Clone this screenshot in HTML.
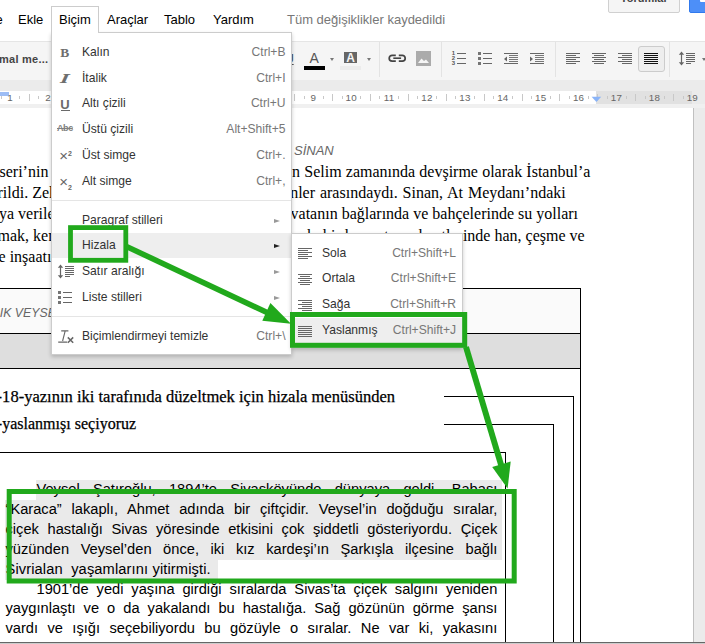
<!DOCTYPE html>
<html lang="tr"><head><meta charset="utf-8"><title>Biçim - Hizala</title>
<style>
html,body{margin:0;padding:0;}
body{width:705px;height:644px;position:relative;overflow:hidden;background:#fff;font-family:"Liberation Sans",Arial,sans-serif;color:#000;}
.abs{position:absolute;white-space:nowrap;}
.mb{position:absolute;top:12px;font-size:13px;line-height:16px;color:#000;white-space:nowrap;}
#tb{position:absolute;left:0;top:41px;width:705px;height:39px;background:#f5f5f5;border-top:1px solid #e5e5e5;box-sizing:border-box;}
#band{position:absolute;left:0;top:80px;width:705px;height:28px;background:#ebebeb;}
#ruler{position:absolute;left:0;top:91px;width:596px;height:13px;background:#fff;}
#ruler2{position:absolute;left:596px;top:91px;width:96px;height:13px;background:#e1e1e1;}
.rn{position:absolute;top:92px;font-size:9.8px;letter-spacing:0.2px;text-indent:0.2px;line-height:11px;color:#666;width:20px;text-align:center;}
#page{position:absolute;left:0;top:108px;width:693px;height:536px;background:#fff;border-right:1px solid #c0c0c0;}
#side{position:absolute;left:694px;top:108px;width:11px;height:536px;background:#ebebeb;}
.sep{position:absolute;top:42px;width:1px;height:35px;background:#e3e3e3;}
.dd{width:0;height:0;border-left:2.5px solid transparent;border-right:2.5px solid transparent;border-top:3px solid #777;}
.ser{position:absolute;font-family:"Liberation Serif","Times New Roman",serif;font-size:16px;line-height:20px;white-space:nowrap;color:#000;}
.par{position:absolute;font-size:14.67px;line-height:20px;color:#000;white-space:nowrap;text-align:justify;text-align-last:justify;}
.hl{background:#eaeaea;}
#menu{position:absolute;left:51px;top:32px;width:241px;height:323px;background:#fff;border:1px solid #ccc;box-sizing:border-box;box-shadow:0 2px 4px rgba(0,0,0,.2);}
.mi{position:absolute;left:0;width:239px;height:26px;font-size:12.1px;line-height:26px;color:#333;}
.mi .l{position:absolute;left:30px;}
.mi .s{position:absolute;right:5.5px;color:#777;}
.tri{position:absolute;right:11px;top:11.6px;width:0;height:0;border-top:2.8px solid transparent;border-bottom:2.8px solid transparent;border-left:6px solid #999;}
.trih{border-left-color:#222;}
.msep{position:absolute;left:0;width:239px;height:1px;background:#e5e5e5;}
#sub{position:absolute;left:291px;top:233px;width:172px;height:115px;background:#fff;border:1px solid #ccc;box-sizing:border-box;box-shadow:0 2px 4px rgba(0,0,0,.2);}
.si{position:absolute;left:0;width:170px;height:25px;font-size:12.1px;line-height:25px;color:#333;}
.si .l{position:absolute;left:30px;}
.si .s{position:absolute;right:6px;color:#777;}
.ln{position:absolute;height:1px;}
</style></head><body>
<div class="mb" style="left:-4.5px">e</div>
<div class="mb" style="left:18px">Ekle</div>
<div class="abs" style="left:51px;top:6px;width:48px;height:27px;border:1px solid #ccc;border-bottom:none;box-sizing:border-box;background:#fff;z-index:5"></div>
<div class="mb" style="left:59px;z-index:6">Biçim</div>
<div class="mb" style="left:107px">Araçlar</div>
<div class="mb" style="left:164px">Tablo</div>
<div class="mb" style="left:213px">Yardım</div>
<div class="mb" style="left:287px;color:#777">Tüm değişiklikler kaydedildi</div>
<div class="abs" style="left:608px;top:-15px;width:72px;height:28px;border:1px solid #d0d0d0;border-radius:2px;box-sizing:border-box;background:#f5f5f5;font-size:11px;font-weight:bold;color:#444;text-align:center;line-height:24px;">Yorumlar</div>
<div class="abs" style="left:689px;top:-15px;width:31px;height:28px;border:1px solid #3079ed;border-radius:2px;box-sizing:border-box;background:#4d8ff8;"></div>
<div class="abs" style="left:700px;top:-2px;width:8px;height:4px;background:#fff;border-radius:1px;"></div>
<div id="tb"></div>
<div class="abs" style="left:-1px;top:52px;font-size:11px;font-weight:bold;color:#444;line-height:14px;letter-spacing:0.25px;">mal me...</div>
<div class="sep" style="left:379px"></div>
<div class="sep" style="left:441px"></div>
<div class="sep" style="left:555px"></div>
<div class="sep" style="left:669px"></div>
<div class="abs" style="left:309.5px;top:50px;font-size:14px;line-height:16px;color:#555;">A</div>
<div class="abs" style="left:304px;top:66px;width:21px;height:4px;background:#000;"></div>
<div class="abs dd" style="left:330px;top:58px;"></div>
<div class="abs" style="left:344px;top:52px;width:13px;height:11px;background:#666;color:#f5f5f5;font-size:12px;font-weight:bold;line-height:12px;text-align:center;">A</div>
<div class="abs" style="left:340px;top:66px;width:21px;height:4px;background:#ececec;"></div>
<div class="abs dd" style="left:367px;top:58px;"></div>
<div class="abs" style="left:285px;top:52px;font-size:12px;font-weight:bold;color:#555;line-height:14px;text-decoration:underline;">U</div>
<svg class="abs" style="left:388px;top:54px" width="19" height="9" viewBox="0 0 19 9"><path d="M7.8 1.3 H4.1 a2.9 2.9 0 0 0 0 5.8 H7.8 M10.8 1.3 H14.3 a2.9 2.9 0 0 1 0 5.8 H10.8" fill="none" stroke="#444" stroke-width="1.7"/><rect x="5.3" y="3.4" width="7.8" height="1.6" fill="#444"/></svg>
<svg class="abs" style="left:416px;top:51px" width="15" height="15" viewBox="0 0 15 15"><rect width="15" height="15" fill="#ababab"/><path d="M2 12 L5.5 7.5 L8 10 L10 8.5 L13 12 Z" fill="#f5f5f5"/></svg>
<div class="ln" style="left:457px;top:53px;width:9px;background:#666;"></div><div class="abs" style="left:451.8px;top:50.4px;font-size:6px;font-weight:bold;line-height:7px;color:#555;">1</div><div class="ln" style="left:457px;top:58px;width:9px;background:#666;"></div><div class="abs" style="left:451.8px;top:55.4px;font-size:6px;font-weight:bold;line-height:7px;color:#555;">2</div><div class="ln" style="left:457px;top:63px;width:9px;background:#666;"></div><div class="abs" style="left:451.8px;top:60.4px;font-size:6px;font-weight:bold;line-height:7px;color:#555;">3</div>
<div class="ln" style="left:483px;top:53px;width:9px;background:#666;"></div><div class="abs" style="left:478px;top:52px;width:3px;height:3px;background:#757575;"></div><div class="ln" style="left:483px;top:58px;width:9px;background:#666;"></div><div class="abs" style="left:478px;top:57px;width:3px;height:3px;background:#757575;"></div><div class="ln" style="left:483px;top:63px;width:9px;background:#666;"></div><div class="abs" style="left:478px;top:62px;width:3px;height:3px;background:#757575;"></div>
<div class="ln" style="left:504px;top:53px;width:14px;background:#666;"></div><div class="ln" style="left:509px;top:55px;width:9px;background:#777;"></div><div class="ln" style="left:509px;top:57px;width:9px;background:#777;"></div><div class="ln" style="left:509px;top:59px;width:9px;background:#777;"></div><div class="ln" style="left:509px;top:61px;width:9px;background:#777;"></div><div class="ln" style="left:504px;top:63px;width:14px;background:#666;"></div><svg class="abs" style="left:504px;top:56px" width="3" height="6" viewBox="0 0 3 5.6"><polygon points="3,0.3 3,5.3 0,2.8" fill="#666"/></svg>
<div class="ln" style="left:530px;top:53px;width:14px;background:#666;"></div><div class="ln" style="left:535px;top:55px;width:9px;background:#777;"></div><div class="ln" style="left:535px;top:57px;width:9px;background:#777;"></div><div class="ln" style="left:535px;top:59px;width:9px;background:#777;"></div><div class="ln" style="left:535px;top:61px;width:9px;background:#777;"></div><div class="ln" style="left:530px;top:63px;width:14px;background:#666;"></div><svg class="abs" style="left:530px;top:56px" width="3" height="6" viewBox="0 0 3 5.6"><polygon points="0,0.3 0,5.3 3,2.8" fill="#666"/></svg>
<div class="ln" style="left:566px;top:53px;width:14px;background:#666;"></div><div class="ln" style="left:566px;top:55px;width:10px;background:#666;"></div><div class="ln" style="left:566px;top:57px;width:14px;background:#666;"></div><div class="ln" style="left:566px;top:59px;width:10px;background:#666;"></div><div class="ln" style="left:566px;top:61px;width:14px;background:#666;"></div><div class="ln" style="left:566px;top:63px;width:10px;background:#666;"></div>
<div class="ln" style="left:592px;top:53px;width:14px;background:#666;"></div><div class="ln" style="left:594px;top:55px;width:10px;background:#666;"></div><div class="ln" style="left:592px;top:57px;width:14px;background:#666;"></div><div class="ln" style="left:594px;top:59px;width:10px;background:#666;"></div><div class="ln" style="left:592px;top:61px;width:14px;background:#666;"></div><div class="ln" style="left:594px;top:63px;width:10px;background:#666;"></div>
<div class="ln" style="left:618px;top:53px;width:14px;background:#666;"></div><div class="ln" style="left:622px;top:55px;width:10px;background:#666;"></div><div class="ln" style="left:618px;top:57px;width:14px;background:#666;"></div><div class="ln" style="left:622px;top:59px;width:10px;background:#666;"></div><div class="ln" style="left:618px;top:61px;width:14px;background:#666;"></div><div class="ln" style="left:622px;top:63px;width:10px;background:#666;"></div>
<div class="abs" style="left:638px;top:46px;width:27px;height:26px;box-sizing:border-box;border:1px solid #ccc;border-radius:3px;background:#eee;"></div>
<div class="ln" style="left:644px;top:53px;width:14px;background:#111;"></div><div class="ln" style="left:644px;top:55px;width:14px;background:#111;"></div><div class="ln" style="left:644px;top:57px;width:14px;background:#111;"></div><div class="ln" style="left:644px;top:59px;width:14px;background:#111;"></div><div class="ln" style="left:644px;top:61px;width:14px;background:#111;"></div><div class="ln" style="left:644px;top:63px;width:14px;background:#111;"></div>
<div class="ln" style="left:686px;top:53px;width:9px;background:#666;"></div><div class="ln" style="left:686px;top:55px;width:9px;background:#666;"></div><div class="ln" style="left:686px;top:57px;width:9px;background:#666;"></div><div class="ln" style="left:686px;top:59px;width:9px;background:#666;"></div><div class="ln" style="left:686px;top:61px;width:9px;background:#666;"></div><div class="ln" style="left:686px;top:63px;width:5px;background:#666;"></div>
<svg class="abs" style="left:678px;top:51px" width="7" height="15" viewBox="0 0 7 15"><path d="M3.5 0.6 L6.2 3.8 H4.1 V11.2 H6.2 L3.5 14.4 L0.8 11.2 H2.9 V3.8 H0.8 Z" fill="#666"/></svg>
<div class="abs dd" style="left:701.8px;top:58px;"></div>
<div id="band"></div>
<div class="abs" style="left:0;top:104px;width:705px;height:4px;background:#f0f0f0;"></div>
<div id="ruler"></div><div id="ruler2"></div>
<div class="abs" style="left:0;top:92px;width:9px;height:4px;background:#9dbdf5;"></div>
<div class="rn" style="left:-0.0px">1</div>
<div class="abs" style="left:19.3px;top:96px;width:1px;height:3px;background:#c8c8c8;"></div>
<div class="abs" style="left:28.8px;top:94px;width:1px;height:7px;background:#c8c8c8;"></div>
<div class="abs" style="left:38.3px;top:96px;width:1px;height:3px;background:#c8c8c8;"></div>
<div class="rn" style="left:37.9px">2</div>
<div class="abs" style="left:57.2px;top:96px;width:1px;height:3px;background:#c8c8c8;"></div>
<div class="abs" style="left:66.7px;top:94px;width:1px;height:7px;background:#c8c8c8;"></div>
<div class="abs" style="left:76.2px;top:96px;width:1px;height:3px;background:#c8c8c8;"></div>
<div class="rn" style="left:75.8px">3</div>
<div class="abs" style="left:95.1px;top:96px;width:1px;height:3px;background:#c8c8c8;"></div>
<div class="abs" style="left:104.6px;top:94px;width:1px;height:7px;background:#c8c8c8;"></div>
<div class="abs" style="left:114.1px;top:96px;width:1px;height:3px;background:#c8c8c8;"></div>
<div class="rn" style="left:113.7px">4</div>
<div class="abs" style="left:133.0px;top:96px;width:1px;height:3px;background:#c8c8c8;"></div>
<div class="abs" style="left:142.5px;top:94px;width:1px;height:7px;background:#c8c8c8;"></div>
<div class="abs" style="left:152.0px;top:96px;width:1px;height:3px;background:#c8c8c8;"></div>
<div class="rn" style="left:151.6px">5</div>
<div class="abs" style="left:170.9px;top:96px;width:1px;height:3px;background:#c8c8c8;"></div>
<div class="abs" style="left:180.4px;top:94px;width:1px;height:7px;background:#c8c8c8;"></div>
<div class="abs" style="left:189.9px;top:96px;width:1px;height:3px;background:#c8c8c8;"></div>
<div class="rn" style="left:189.5px">6</div>
<div class="abs" style="left:208.8px;top:96px;width:1px;height:3px;background:#c8c8c8;"></div>
<div class="abs" style="left:218.3px;top:94px;width:1px;height:7px;background:#c8c8c8;"></div>
<div class="abs" style="left:227.8px;top:96px;width:1px;height:3px;background:#c8c8c8;"></div>
<div class="rn" style="left:227.4px">7</div>
<div class="abs" style="left:246.7px;top:96px;width:1px;height:3px;background:#c8c8c8;"></div>
<div class="abs" style="left:256.2px;top:94px;width:1px;height:7px;background:#c8c8c8;"></div>
<div class="abs" style="left:265.7px;top:96px;width:1px;height:3px;background:#c8c8c8;"></div>
<div class="rn" style="left:265.3px">8</div>
<div class="abs" style="left:284.6px;top:96px;width:1px;height:3px;background:#c8c8c8;"></div>
<div class="abs" style="left:294.1px;top:94px;width:1px;height:7px;background:#c8c8c8;"></div>
<div class="abs" style="left:303.6px;top:96px;width:1px;height:3px;background:#c8c8c8;"></div>
<div class="rn" style="left:303.2px">9</div>
<div class="abs" style="left:322.5px;top:96px;width:1px;height:3px;background:#c8c8c8;"></div>
<div class="abs" style="left:332.0px;top:94px;width:1px;height:7px;background:#c8c8c8;"></div>
<div class="abs" style="left:341.5px;top:96px;width:1px;height:3px;background:#c8c8c8;"></div>
<div class="rn" style="left:341.1px">10</div>
<div class="abs" style="left:360.4px;top:96px;width:1px;height:3px;background:#c8c8c8;"></div>
<div class="abs" style="left:369.9px;top:94px;width:1px;height:7px;background:#c8c8c8;"></div>
<div class="abs" style="left:379.4px;top:96px;width:1px;height:3px;background:#c8c8c8;"></div>
<div class="rn" style="left:379.0px">11</div>
<div class="abs" style="left:398.3px;top:96px;width:1px;height:3px;background:#c8c8c8;"></div>
<div class="abs" style="left:407.8px;top:94px;width:1px;height:7px;background:#c8c8c8;"></div>
<div class="abs" style="left:417.3px;top:96px;width:1px;height:3px;background:#c8c8c8;"></div>
<div class="rn" style="left:416.9px">12</div>
<div class="abs" style="left:436.2px;top:96px;width:1px;height:3px;background:#c8c8c8;"></div>
<div class="abs" style="left:445.7px;top:94px;width:1px;height:7px;background:#c8c8c8;"></div>
<div class="abs" style="left:455.2px;top:96px;width:1px;height:3px;background:#c8c8c8;"></div>
<div class="rn" style="left:454.8px">13</div>
<div class="abs" style="left:474.1px;top:96px;width:1px;height:3px;background:#c8c8c8;"></div>
<div class="abs" style="left:483.6px;top:94px;width:1px;height:7px;background:#c8c8c8;"></div>
<div class="abs" style="left:493.1px;top:96px;width:1px;height:3px;background:#c8c8c8;"></div>
<div class="rn" style="left:492.7px">14</div>
<div class="abs" style="left:512.0px;top:96px;width:1px;height:3px;background:#c8c8c8;"></div>
<div class="abs" style="left:521.5px;top:94px;width:1px;height:7px;background:#c8c8c8;"></div>
<div class="abs" style="left:531.0px;top:96px;width:1px;height:3px;background:#c8c8c8;"></div>
<div class="rn" style="left:530.6px">15</div>
<div class="abs" style="left:549.9px;top:96px;width:1px;height:3px;background:#c8c8c8;"></div>
<div class="abs" style="left:559.4px;top:94px;width:1px;height:7px;background:#c8c8c8;"></div>
<div class="abs" style="left:568.9px;top:96px;width:1px;height:3px;background:#c8c8c8;"></div>
<div class="rn" style="left:568.5px">16</div>
<div class="abs" style="left:587.8px;top:96px;width:1px;height:3px;background:#c8c8c8;"></div>
<div class="abs" style="left:597.3px;top:94px;width:1px;height:7px;background:#c8c8c8;"></div>
<div class="abs" style="left:606.8px;top:96px;width:1px;height:3px;background:#c8c8c8;"></div>
<div class="rn" style="left:606.4px">17</div>
<div class="abs" style="left:625.7px;top:96px;width:1px;height:3px;background:#c8c8c8;"></div>
<div class="abs" style="left:635.2px;top:94px;width:1px;height:7px;background:#c8c8c8;"></div>
<div class="abs" style="left:644.7px;top:96px;width:1px;height:3px;background:#c8c8c8;"></div>
<div class="rn" style="left:644.3px">18</div>
<div class="abs" style="left:663.6px;top:96px;width:1px;height:3px;background:#c8c8c8;"></div>
<div class="abs" style="left:673.1px;top:94px;width:1px;height:7px;background:#c8c8c8;"></div>
<div class="abs" style="left:682.6px;top:96px;width:1px;height:3px;background:#c8c8c8;"></div>
<div class="rn" style="left:682.2px">19</div>
<div class="abs" style="left:1px;top:96px;width:1px;height:3px;background:#c8c8c8;"></div>
<svg class="abs" style="left:591px;top:96px" width="11" height="7" viewBox="0 0 11 7"><path d="M0.6 0.8 H10.2 L5.4 6 Z" fill="#8ab4f8"/></svg>
<div id="page"></div><div id="side"></div>
<div class="abs" style="left:294px;top:143px;font-size:13px;font-style:italic;color:#666;line-height:15px;">SİNAN</div>
<div class="ser" style="right:114.7px;top:162.2px;word-spacing:0.2px;">Yavuz Sultan Selim zamanında devşirme olarak İstanbul’a</div>
<div class="ser" style="right:139.3px;top:182.6px;word-spacing:0.9px;">seçilenler arasındaydı. Sinan, At Meydanı’ndaki</div>
<div class="ser" style="right:127.0px;top:204.4px;">burada vatanın bağlarında ve bahçelerinde su yolları</div>
<div class="ser" style="right:120.4px;top:225.5px;">inşa etmek, bir kısım taşra kentlerinde han, çeşme ve</div>
<div class="ser" style="left:-0.5px;top:162.2px;">seri’nin</div>
<div class="ser" style="left:-2.5px;top:182.6px;">rildi. Zeki, genç</div>
<div class="ser" style="left:-1.0px;top:204.4px;">ya verilen çocuk</div>
<div class="ser" style="left:-2.5px;top:225.5px;">mak, kemer</div>
<div class="ser" style="right:653.6px;top:246.6px;">türbe inşaatı</div>
<div class="abs" style="left:-10px;top:288px;width:591px;height:400px;box-sizing:border-box;border:1px solid #000;"></div>
<div class="abs" style="left:-10px;top:289px;width:590px;height:44px;background:#fafafa;"></div>
<div class="abs" style="left:-10px;top:333px;width:590px;height:1px;background:#000;"></div>
<div class="abs" style="left:-10px;top:334px;width:590px;height:34px;background:#dedede;"></div>
<div class="abs" style="left:-10px;top:368px;width:590px;height:1px;background:#000;"></div>
<div class="abs" style="left:-8.4px;top:306px;font-size:12.3px;font-style:italic;color:#666;line-height:15px;">ŞIK VEYSEL</div>
<div class="abs" style="left:444px;top:396px;width:130px;height:300px;box-sizing:border-box;border-top:1px solid #000;border-right:1px solid #000;"></div>
<div class="abs" style="left:444px;top:424px;width:110px;height:300px;box-sizing:border-box;border-top:1px solid #000;border-right:1px solid #000;"></div>
<div class="abs" style="left:-10px;top:452px;width:516px;height:300px;box-sizing:border-box;border-top:1px solid #000;border-right:1px solid #000;"></div>
<div class="abs" style="left:-3.4px;top:387px;font-family:'Liberation Serif',serif;font-size:16.54px;line-height:20px;-webkit-text-stroke:0.25px #000;" id="g1">-18-yazının iki tarafınıda düzeltmek için hizala menüsünden</div>
<div class="abs" style="left:-3.2px;top:413.5px;font-family:'Liberation Serif',serif;font-size:16.05px;line-height:20px;-webkit-text-stroke:0.25px #000;" id="g2">-yaslanmışı seçiyoruz</div>
<div class="abs" style="left:36px;top:480px;width:466px;height:20px;background:#eaeaea;"></div>
<div class="abs" style="left:5px;top:500px;width:497px;height:60px;background:#eaeaea;"></div>
<div class="abs" style="left:5px;top:560px;width:213px;height:20px;background:#eaeaea;"></div>
<div class="par" style="left:36.5px;top:478.77px;width:460.8px;">Veysel Şatıroğlu, 1894’te Sivasköyünde dünyaya geldi. Babası</div>
<div class="par" style="left:5.5px;top:498.72px;width:491.8px;">“Karaca” lakaplı, Ahmet adında bir çiftçidir. Veysel’in doğduğu sıralar,</div>
<div class="par" style="left:5.5px;top:518.67px;width:491.8px;">çiçek hastalığı Sivas yöresinde etkisini çok şiddetli gösteriyordu. Çiçek</div>
<div class="par" style="left:5.5px;top:538.62px;width:491.8px;">yüzünden Veysel’den önce, iki kız kardeşi’ın Şarkışla ilçesine bağlı</div>
<div class="par" style="left:5.5px;top:558.57px;text-align:left;text-align-last:left;letter-spacing:0.12px;">Sivrialan&nbsp; yaşamlarını yitirmişti.</div>
<div class="par" style="left:36.5px;top:578.52px;width:460.8px;">1901’de yedi yaşına girdiği sıralarda Sivas’ta çiçek salgını yeniden</div>
<div class="par" style="left:5.5px;top:598.47px;width:491.8px;">yaygınlaştı ve o da yakalandı bu hastalığa. Sağ gözünün görme şansı</div>
<div class="par" style="left:5.5px;top:618.42px;width:491.8px;">vardı ve ışığı seçebiliyordu bu gözüyle o sıralar. Ne var ki, yakasını</div>
<div class="abs" style="left:0;top:642px;width:705px;height:1px;background:#666;"></div>
<div class="abs" style="left:0;top:643px;width:705px;height:1px;background:#ccc;"></div>
<div id="menu">
<div class="abs" style="left:0;top:200px;width:239px;height:25px;background:#eee;"></div>
<div class="mi" style="top:6px;"><span class="l">Kalın</span><span class="s">Ctrl+B</span></div>
<div class="mi" style="top:32px;"><span class="l">İtalik</span><span class="s">Ctrl+I</span></div>
<div class="mi" style="top:57px;"><span class="l">Altı çizili</span><span class="s">Ctrl+U</span></div>
<div class="mi" style="top:83px;"><span class="l">Üstü çizili</span><span class="s">Alt+Shift+5</span></div>
<div class="mi" style="top:109px;"><span class="l">Üst simge</span><span class="s">Ctrl+.</span></div>
<div class="mi" style="top:135px;"><span class="l">Alt simge</span><span class="s">Ctrl+,</span></div>
<div class="mi" style="top:174px;"><span class="l">Paragraf stilleri</span><span class="tri"></span></div>
<div class="mi" style="top:199px;"><span class="l">Hizala</span><span class="tri trih"></span></div>
<div class="mi" style="top:225px;"><span class="l">Satır aralığı</span><span class="tri"></span></div>
<div class="mi" style="top:251px;"><span class="l">Liste stilleri</span><span class="tri"></span></div>
<div class="mi" style="top:290px;"><span class="l">Biçimlendirmeyi temizle</span><span class="s">Ctrl+\</span></div>
<div class="msep" style="top:167px"></div>
<div class="msep" style="top:283px"></div>
<div class="abs" style="left:8.299999999999997px;top:11.5px;font-family:'Liberation Serif',serif;font-size:13.5px;font-weight:bold;color:#6e6e6e;line-height:15px;">B</div>
<div class="abs" style="left:10px;top:37.5px;font-family:'DejaVu Serif',serif;font-size:12.5px;font-weight:bold;color:#6e6e6e;line-height:15px;transform:skewX(-24deg) scaleX(1.45);transform-origin:50% 50%;">I</div>
<div class="abs" style="left:8.299999999999997px;top:64px;font-size:13px;font-weight:bold;color:#6a6a6a;line-height:15px;">U</div>
<div class="abs" style="left:8.5px;top:77px;width:9px;height:1px;background:#6a6a6a;"></div>
<div class="abs" style="left:5px;top:89px;font-size:9px;font-weight:bold;color:#808080;line-height:12px;text-decoration:line-through;letter-spacing:-0.4px;">Abc</div>
<div class="abs" style="left:7.299999999999997px;top:114.5px;font-size:13px;color:#666;line-height:15px;"><span style="font-size:15px">×</span><span style="font-size:7px;font-weight:bold;position:relative;top:-5px;left:0px">2</span></div>
<div class="abs" style="left:7.299999999999997px;top:140.5px;font-size:13px;color:#666;line-height:15px;"><span style="font-size:15px">×</span><span style="font-size:7px;font-weight:bold;position:relative;top:3px;left:0px">2</span></div>
<div class="abs" style="left:5px;top:231px;"><svg width="18" height="15" viewBox="0 0 18 15"><path d="M3.5 0.6 L6.2 3.8 H4.1 V11.2 H6.2 L3.5 14.4 L0.8 11.2 H2.9 V3.8 H0.8 Z" fill="#666"/><g fill="#666"><rect x="8" y="2" width="9" height="1"/><rect x="8" y="4" width="9" height="1"/><rect x="8" y="6" width="9" height="1"/><rect x="8" y="8" width="9" height="1"/><rect x="8" y="10" width="9" height="1"/><rect x="8" y="12" width="5" height="1"/></g></svg></div>
<div class="abs" style="left:0;top:0"><div class="ln" style="left:11px;top:259px;width:9px;background:#666;"></div><div class="abs" style="left:6px;top:258px;width:3px;height:3px;background:#757575;"></div><div class="ln" style="left:11px;top:264px;width:9px;background:#666;"></div><div class="abs" style="left:6px;top:263px;width:3px;height:3px;background:#757575;"></div><div class="ln" style="left:11px;top:269px;width:9px;background:#666;"></div><div class="abs" style="left:6px;top:268px;width:3px;height:3px;background:#757575;"></div></div>
<div class="abs" style="left:6px;top:297px;"><svg width="17" height="14" viewBox="0 0 17 14"><g fill="none" stroke="#666" stroke-width="1.1"><path d="M3.2 0.9 H10.4 M7.2 0.9 L4.6 11 M0.2 12.1 H9.2"/><path d="M9.8 7.4 L15.2 12.8 M15.2 7.4 L9.8 12.8" stroke-width="1.5"/></g></svg></div>
</div>
<div id="sub">
<div class="si" style="top:7px;"><span class="l">Sola</span><span class="s">Ctrl+Shift+L</span></div>
<div class="ln" style="left:6px;top:14px;width:14px;background:#666;"></div><div class="ln" style="left:6px;top:16px;width:10px;background:#666;"></div><div class="ln" style="left:6px;top:18px;width:14px;background:#666;"></div><div class="ln" style="left:6px;top:20px;width:10px;background:#666;"></div><div class="ln" style="left:6px;top:22px;width:14px;background:#666;"></div><div class="ln" style="left:6px;top:24px;width:10px;background:#666;"></div>
<div class="si" style="top:32px;"><span class="l">Ortala</span><span class="s">Ctrl+Shift+E</span></div>
<div class="ln" style="left:6px;top:40px;width:14px;background:#666;"></div><div class="ln" style="left:8px;top:42px;width:10px;background:#666;"></div><div class="ln" style="left:6px;top:44px;width:14px;background:#666;"></div><div class="ln" style="left:8px;top:46px;width:10px;background:#666;"></div><div class="ln" style="left:6px;top:48px;width:14px;background:#666;"></div><div class="ln" style="left:8px;top:50px;width:10px;background:#666;"></div>
<div class="si" style="top:58px;"><span class="l">Sağa</span><span class="s">Ctrl+Shift+R</span></div>
<div class="ln" style="left:6px;top:66px;width:14px;background:#666;"></div><div class="ln" style="left:10px;top:68px;width:10px;background:#666;"></div><div class="ln" style="left:6px;top:70px;width:14px;background:#666;"></div><div class="ln" style="left:10px;top:72px;width:10px;background:#666;"></div><div class="ln" style="left:6px;top:74px;width:14px;background:#666;"></div><div class="ln" style="left:10px;top:76px;width:10px;background:#666;"></div>
<div class="si" style="top:84px;background:#eee;"><span class="l">Yaslanmış</span><span class="s">Ctrl+Shift+J</span></div>
<div class="ln" style="left:6px;top:92px;width:14px;background:#666;"></div><div class="ln" style="left:6px;top:94px;width:14px;background:#666;"></div><div class="ln" style="left:6px;top:96px;width:14px;background:#666;"></div><div class="ln" style="left:6px;top:98px;width:14px;background:#666;"></div><div class="ln" style="left:6px;top:100px;width:14px;background:#666;"></div><div class="ln" style="left:6px;top:102px;width:14px;background:#666;"></div>
</div>
<svg class="abs" style="left:0;top:0;z-index:50" width="705" height="644" viewBox="0 0 705 644">
<g fill="none" stroke="#21a91c" stroke-width="5">
<rect x="70.5" y="227.6" width="55.3" height="32.7" stroke-width="4.8"/>
<rect x="292.5" y="314.5" width="172.2" height="30.8"/>
<rect x="9.2" y="491.5" width="505" height="89.5"/>
</g>
<g stroke="#21a91c" fill="#21a91c">
<line x1="127" y1="246.7" x2="275" y2="316.3" stroke-width="5.6"/>
<polygon points="291,323.8 262.3,320.7 270.4,303" stroke="none"/>
<line x1="466" y1="347" x2="502" y2="468" stroke-width="6"/>
<polygon points="507.6,488.5 492.2,466.9 510.7,461.6" stroke="none"/>
</g>
</svg>
</body></html>
